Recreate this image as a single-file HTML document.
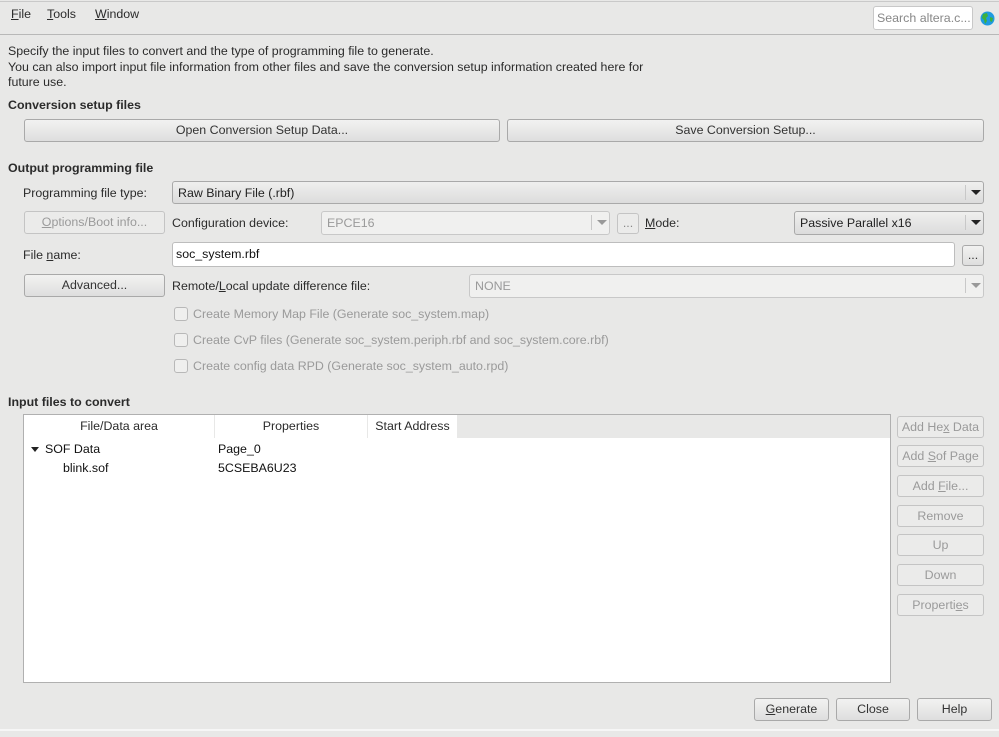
<!DOCTYPE html>
<html><head><meta charset="utf-8"><style>
*{box-sizing:border-box;margin:0;padding:0}
body{width:999px;height:737px;background:#e8e8e7;font-family:"Liberation Sans",sans-serif;font-size:12.4px;color:#2b2b2b;position:relative;overflow:hidden}
.a{position:absolute;white-space:nowrap}
.t{line-height:16px}
.b{font-weight:bold}
.btn{position:absolute;border:1px solid #a9a9a9;border-radius:3px;background:linear-gradient(#f2f2f1,#dedede);text-align:center;line-height:21px;color:#333}
.dis{background:#ebebea;color:#9a9a9a;border-color:#c4c4c4}
.cb{position:absolute;border:1px solid #a9a9a9;border-radius:3px;background:linear-gradient(#efefee,#dcdcdc);padding-left:5px;line-height:22px;color:#222}
.cb .ar{position:absolute;right:0;top:3px;width:18px;height:15px;border-left:1px solid #c8c8c8}
.cb .ar:after{content:"";position:absolute;left:5px;top:5px;border-left:5px solid transparent;border-right:5px solid transparent;border-top:5px solid #222}
.cd{background:#f0f0ef;color:#9a9a9a;border-color:#c8c8c8}
.cd .ar:after{border-top-color:#999}
.chk{position:absolute;width:14px;height:14px;border:1px solid #b8b8b8;border-radius:3px;background:#efefee}
.g{color:#9a9a9a}
u{text-decoration:underline}
</style></head><body>
<div class="a" style="left:0;top:1px;width:999px;height:1px;background:#c9c9c9"></div>
<div class="a t" style="left:11px;top:6px"><u>F</u>ile</div>
<div class="a t" style="left:47px;top:6px"><u>T</u>ools</div>
<div class="a t" style="left:95px;top:6px"><u>W</u>indow</div>
<div class="a" style="left:873px;top:6px;width:100px;height:24px;background:#fff;border:1px solid #c8c8c8;border-radius:3px;color:#888;padding-left:3px;line-height:22px">Search altera.c...</div>
<svg class="a" style="left:980px;top:11px" width="15" height="15" viewBox="0 0 15 15"><circle cx="7.5" cy="7.5" r="7" fill="#1e9be0"/><path d="M3 3 L7 2 L8 5 L6 7 L7 10 L5 13 L4 9 L2 7 Z" fill="#3db13d"/><path d="M10 6 L13 7 L12 11 L10 10 Z" fill="#3db13d"/></svg>
<div class="a" style="left:0;top:34px;width:999px;height:1px;background:#b8b8b8"></div>
<div class="a t" style="left:8px;top:43px">Specify the input files to convert and the type of programming file to generate.</div>
<div class="a t" style="left:8px;top:59px">You can also import input file information from other files and save the conversion setup information created here for</div>
<div class="a t" style="left:8px;top:74px">future use.</div>
<div class="a t b" style="left:8px;top:97px">Conversion setup files</div>
<div class="btn" style="left:24px;top:119px;width:476px;height:23px">Open Conversion Setup Data...</div>
<div class="btn" style="left:507px;top:119px;width:477px;height:23px">Save Conversion Setup...</div>
<div class="a t b" style="left:8px;top:160px">Output programming file</div>
<div class="a t" style="left:23px;top:185px">Programming file type:</div>
<div class="cb" style="left:172px;top:181px;width:812px;height:23px">Raw Binary File (.rbf)<div class="ar"></div></div>
<div class="btn dis" style="left:24px;top:211px;width:141px;height:23px"><u>O</u>ptions/Boot info...</div>
<div class="a t" style="left:172px;top:215px">Confi<u>g</u>uration device:</div>
<div class="cb cd" style="left:321px;top:211px;width:289px;height:24px">EPCE16<div class="ar"></div></div>
<div class="btn dis" style="left:617px;top:213px;width:22px;height:21px;line-height:18px;color:#888">...</div>
<div class="a t" style="left:645px;top:215px"><u>M</u>ode:</div>
<div class="cb" style="left:794px;top:211px;width:190px;height:24px">Passive Parallel x16<div class="ar"></div></div>
<div class="a t" style="left:23px;top:247px">File <u>n</u>ame:</div>
<div class="a" style="left:172px;top:242px;width:783px;height:25px;background:#fff;border:1px solid #bdbdbd;border-radius:3px;padding-left:3px;line-height:23px;color:#111">soc_system.rbf</div>
<div class="btn" style="left:962px;top:245px;width:22px;height:21px;line-height:18px">...</div>
<div class="btn" style="left:24px;top:274px;width:141px;height:23px">Advanced...</div>
<div class="a t" style="left:172px;top:278px">Remote/<u>L</u>ocal update difference file:</div>
<div class="cb cd" style="left:469px;top:274px;width:515px;height:24px">NONE<div class="ar"></div></div>
<div class="chk" style="left:174px;top:307px"></div><div class="a t g" style="left:193px;top:306px">Create Memory Map File (Generate soc_system.map)</div>
<div class="chk" style="left:174px;top:333px"></div><div class="a t g" style="left:193px;top:332px">Create CvP files (Generate soc_system.periph.rbf and soc_system.core.rbf)</div>
<div class="chk" style="left:174px;top:359px"></div><div class="a t g" style="left:193px;top:358px">Create config data RPD (Generate soc_system_auto.rpd)</div>
<div class="a t b" style="left:8px;top:394px">Input files to convert</div>
<div class="a" style="left:23px;top:414px;width:868px;height:269px;background:#fff;border:1px solid #b0b0b0"></div>
<div class="a" style="left:24px;top:415px;width:866px;height:23px;background:#e8e8e7"></div>
<div class="a" style="left:24px;top:415px;width:190px;height:23px;background:#fff;text-align:center;line-height:23px">File/Data area</div>
<div class="a" style="left:215px;top:415px;width:152px;height:23px;background:#fff;text-align:center;line-height:23px">Properties</div>
<div class="a" style="left:368px;top:415px;width:89px;height:23px;background:#fff;text-align:center;line-height:23px">Start Address</div>
<div class="a" style="left:31px;top:447px;border-left:4px solid transparent;border-right:4px solid transparent;border-top:5px solid #222"></div>
<div class="a t" style="left:45px;top:441px;color:#111">SOF Data</div>
<div class="a t" style="left:218px;top:441px;color:#111">Page_0</div>
<div class="a t" style="left:63px;top:460px;color:#111">blink.sof</div>
<div class="a t" style="left:218px;top:460px;color:#111">5CSEBA6U23</div>
<div class="btn dis" style="left:897px;top:416px;width:87px;height:22px">Add He<u>x</u> Data</div>
<div class="btn dis" style="left:897px;top:445px;width:87px;height:22px">Add <u>S</u>of Page</div>
<div class="btn dis" style="left:897px;top:475px;width:87px;height:22px">Add <u>F</u>ile...</div>
<div class="btn dis" style="left:897px;top:505px;width:87px;height:22px">Remove</div>
<div class="btn dis" style="left:897px;top:534px;width:87px;height:22px">Up</div>
<div class="btn dis" style="left:897px;top:564px;width:87px;height:22px">Down</div>
<div class="btn dis" style="left:897px;top:594px;width:87px;height:22px">Properti<u>e</u>s</div>
<div class="btn" style="left:754px;top:698px;width:75px;height:23px"><u>G</u>enerate</div>
<div class="btn" style="left:836px;top:698px;width:74px;height:23px">Close</div>
<div class="btn" style="left:917px;top:698px;width:75px;height:23px">Help</div>
<div class="a" style="left:0;top:729px;width:999px;height:2px;background:#f6f6f6"></div>
</body></html>
